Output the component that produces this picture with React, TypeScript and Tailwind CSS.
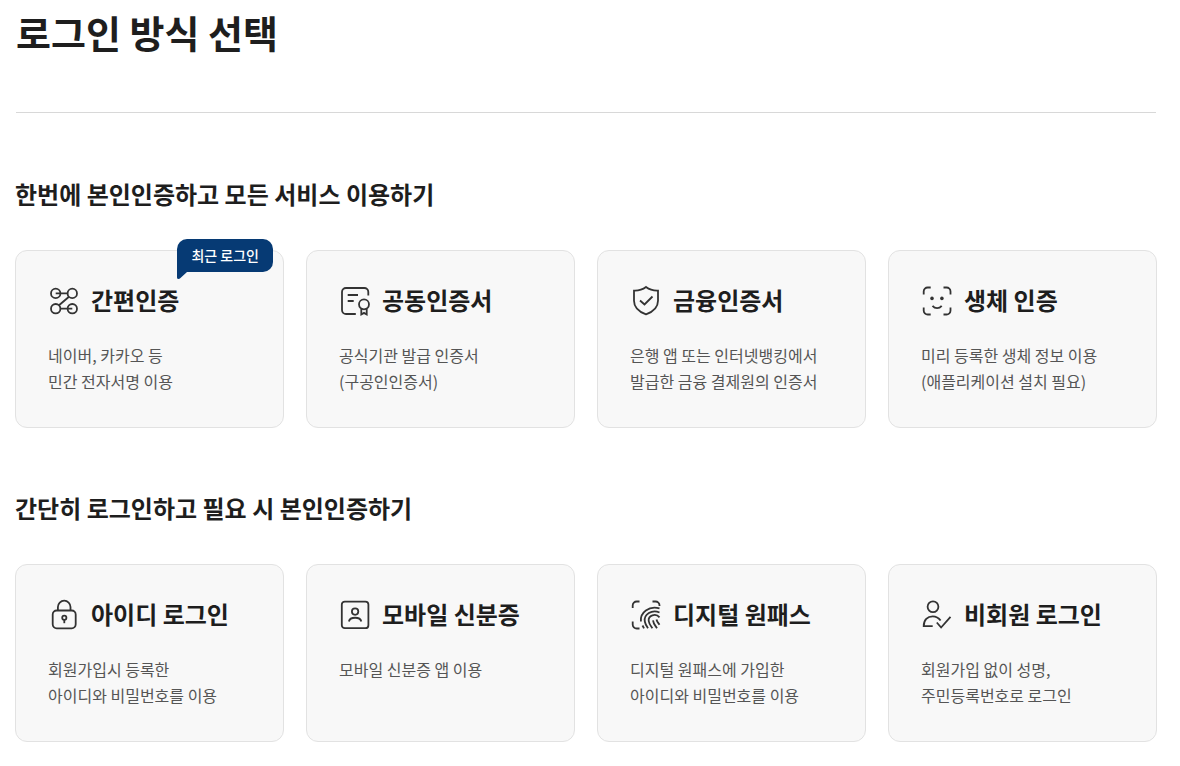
import React from 'react';

interface LoginMethod {
  title: string;
  lines: string[];
  icon: React.ReactNode;
  recent?: boolean;
}

interface LoginSection {
  heading: string;
  methods: LoginMethod[];
}

const SimpleAuthIcon = (
  <>
    <circle cx="7.7" cy="8.4" r="4.7" />
    <circle cx="24.3" cy="8.4" r="4.7" />
    <circle cx="7.7" cy="23.7" r="4.7" />
    <circle cx="24.3" cy="23.7" r="4.7" />
    <path d="M7.7 8.4h11.9M21 11.7L11 20.3M12.4 23.7h11.9" />
  </>
);

const CertificateIcon = (
  <>
    <path d="M29.3 10.5V7a4 4 0 0 0-4-4H7a4 4 0 0 0-4 4v18a4 4 0 0 0 4 4h9.8" />
    <path d="M8.7 10h10.3M8.7 16h6" />
    <circle cx="25" cy="19.3" r="5" />
    <path d="M22.3 23.8v5.7l2.7-1.6 2.7 1.6v-5.7" />
  </>
);

const ShieldIcon = (
  <>
    <path d="M16 2c3.4 2.6 7.4 3.8 12 3.6v10.2c0 6-4.5 10.9-12 13.6C8.5 26.7 4 21.8 4 15.8V5.6C8.6 5.8 12.6 4.6 16 2z" />
    <path d="M10 15.5l4.5 4 8-8" />
  </>
);

const FaceIcon = (
  <>
    <path d="M2.7 9.5V6.5a4 4 0 0 1 4-4h3M22.5 2.5h3a4 4 0 0 1 4 4v3M2.7 22.5v3a4 4 0 0 0 4 4h3M22.5 29.5h3a4 4 0 0 0 4-4v-3" />
    <path d="M11.5 20.8c2.5 3 6.7 3 9.2 0" />
    <circle cx="11" cy="13.4" r="1.8" fill="currentColor" stroke="none" />
    <circle cx="20.9" cy="13.4" r="1.8" fill="currentColor" stroke="none" />
  </>
);

const LockIcon = (
  <>
    <rect x="4.7" y="11.5" width="23" height="17.8" rx="4" />
    <path d="M9.9 11.5V8a6.3 6.3 0 0 1 12.6 0v3.5" />
    <circle cx="16.3" cy="18.7" r="2.1" />
    <path d="M16.3 20.8v3.4" />
  </>
);

const MobileIdIcon = (
  <>
    <rect x="2.8" y="2.6" width="26.6" height="26.6" rx="3" />
    <circle cx="16.1" cy="12.6" r="3.2" />
    <path d="M9.9 22.5c1-5 11.4-5 12.4 0" />
  </>
);

const FingerprintIcon = (
  <>
    <path d="M2.7 9V6.5a4 4 0 0 1 4-4H9.5M22.5 2.5h3a4 4 0 0 1 4 4v.5M2.7 22.5v3a4 4 0 0 0 4 4h2.8" />
    <path d="M29.5 9.3C19 6.3 9.8 13.5 10.9 22.5" />
    <path d="M12.5 26.5l1.5 2.8" />
    <path d="M29.5 13.5C22 10 13.5 15.5 14.8 22.5c.4 2.5 1.5 4.3 3.2 6.7" />
    <path d="M29.5 18.3c-3.8-4.5-11.5-1.8-10.8 3.7.3 2.8 1.8 4.6 3.7 7.2" />
    <path d="M23 21.3c.5 3.7 2 5 4 7.9" />
    <path d="M26.5 20.5c.5 2.3 1.7 3.5 3 5.2" />
  </>
);

const GuestIcon = (
  <>
    <circle cx="12" cy="7.7" r="5.4" />
    <path d="M11.7 27.2H2.7C2.7 21 6.5 17.3 11.7 17.3c3.3 0 6 1.5 7.9 4.2" />
    <path d="M15.8 23.5l4.3 5 9.4-10.7" />
  </>
);

const sections: LoginSection[] = [
  {
    heading: '한번에 본인인증하고 모든 서비스 이용하기',
    methods: [
      { title: '간편인증', lines: ['네이버, 카카오 등', '민간 전자서명 이용'], icon: SimpleAuthIcon, recent: true },
      { title: '공동인증서', lines: ['공식기관 발급 인증서', '(구공인인증서)'], icon: CertificateIcon },
      { title: '금융인증서', lines: ['은행 앱 또는 인터넷뱅킹에서', '발급한 금융 결제원의 인증서'], icon: ShieldIcon },
      { title: '생체 인증', lines: ['미리 등록한 생체 정보 이용', '(애플리케이션 설치 필요)'], icon: FaceIcon },
    ],
  },
  {
    heading: '간단히 로그인하고 필요 시 본인인증하기',
    methods: [
      { title: '아이디 로그인', lines: ['회원가입시 등록한', '아이디와 비밀번호를 이용'], icon: LockIcon },
      { title: '모바일 신분증', lines: ['모바일 신분증 앱 이용'], icon: MobileIdIcon },
      { title: '디지털 원패스', lines: ['디지털 원패스에 가입한', '아이디와 비밀번호를 이용'], icon: FingerprintIcon },
      { title: '비회원 로그인', lines: ['회원가입 없이 성명,', '주민등록번호로 로그인'], icon: GuestIcon },
    ],
  },
];

const RecentBadge: React.FC = () => (
  <span className="absolute -top-3 right-2.5 h-[33px] px-3.5 pb-0.5 flex items-center rounded-[10px] rounded-bl-none bg-[#063a74] text-sm font-medium text-white whitespace-nowrap">
    최근 로그인
    {/* speech bubble tail */}
    <svg className="absolute left-0 top-full" width="10" height="7" viewBox="0 0 10 7" aria-hidden="true">
      <path d="M0 0H10L3.2 6.3Q2.5 7 1.5 7Q0 7 0 5.5Z" fill="#063a74" />
    </svg>
  </span>
);

const MethodCard: React.FC<{ method: LoginMethod }> = ({ method }) => (
  <a
    href="#"
    className="relative block px-8 pt-8 pb-[33px] rounded-xl border border-[#e2e2e2] bg-[#f8f8f8] hover:border-[#063a74] transition-colors"
  >
    {method.recent && <RecentBadge />}
    <div className="flex items-center gap-[11px]">
      <svg
        className="w-8 h-8 shrink-0 text-[#333333]"
        viewBox="0 0 32 32"
        fill="none"
        stroke="currentColor"
        strokeWidth="1.8"
        aria-hidden="true"
      >
        {method.icon}
      </svg>
      <h3 className="pb-0.5 text-2xl leading-[34px] font-bold whitespace-nowrap">{method.title}</h3>
    </div>
    <p className="mt-[23px] text-base leading-[26px] text-[#555555]">
      {method.lines.map((line) => (
        <span key={line} className="block">{line}</span>
      ))}
    </p>
  </a>
);

const App: React.FC = () => {
  return (
    <main className="bg-white pl-[15px] pr-[23px] pt-1 pb-6 text-[#1e1e1e] font-['Noto_Sans_CJK_KR',sans-serif] break-keep">
      <header className="mx-px mb-[63px] pb-[52px] border-b border-[#d8d8d8]">
        <h1 className="text-[38px] leading-[56px] font-bold">로그인 방식 선택</h1>
      </header>

      <div className="flex flex-col gap-[62px]">
        {sections.map((section) => (
          <section key={section.heading}>
            <h2 className="text-2xl leading-9 font-bold">{section.heading}</h2>
            <div className="mt-[38px] grid grid-cols-4 gap-[22px]">
              {section.methods.map((method) => (
                <MethodCard key={method.title} method={method} />
              ))}
            </div>
          </section>
        ))}
      </div>
    </main>
  );
};

export default App;
